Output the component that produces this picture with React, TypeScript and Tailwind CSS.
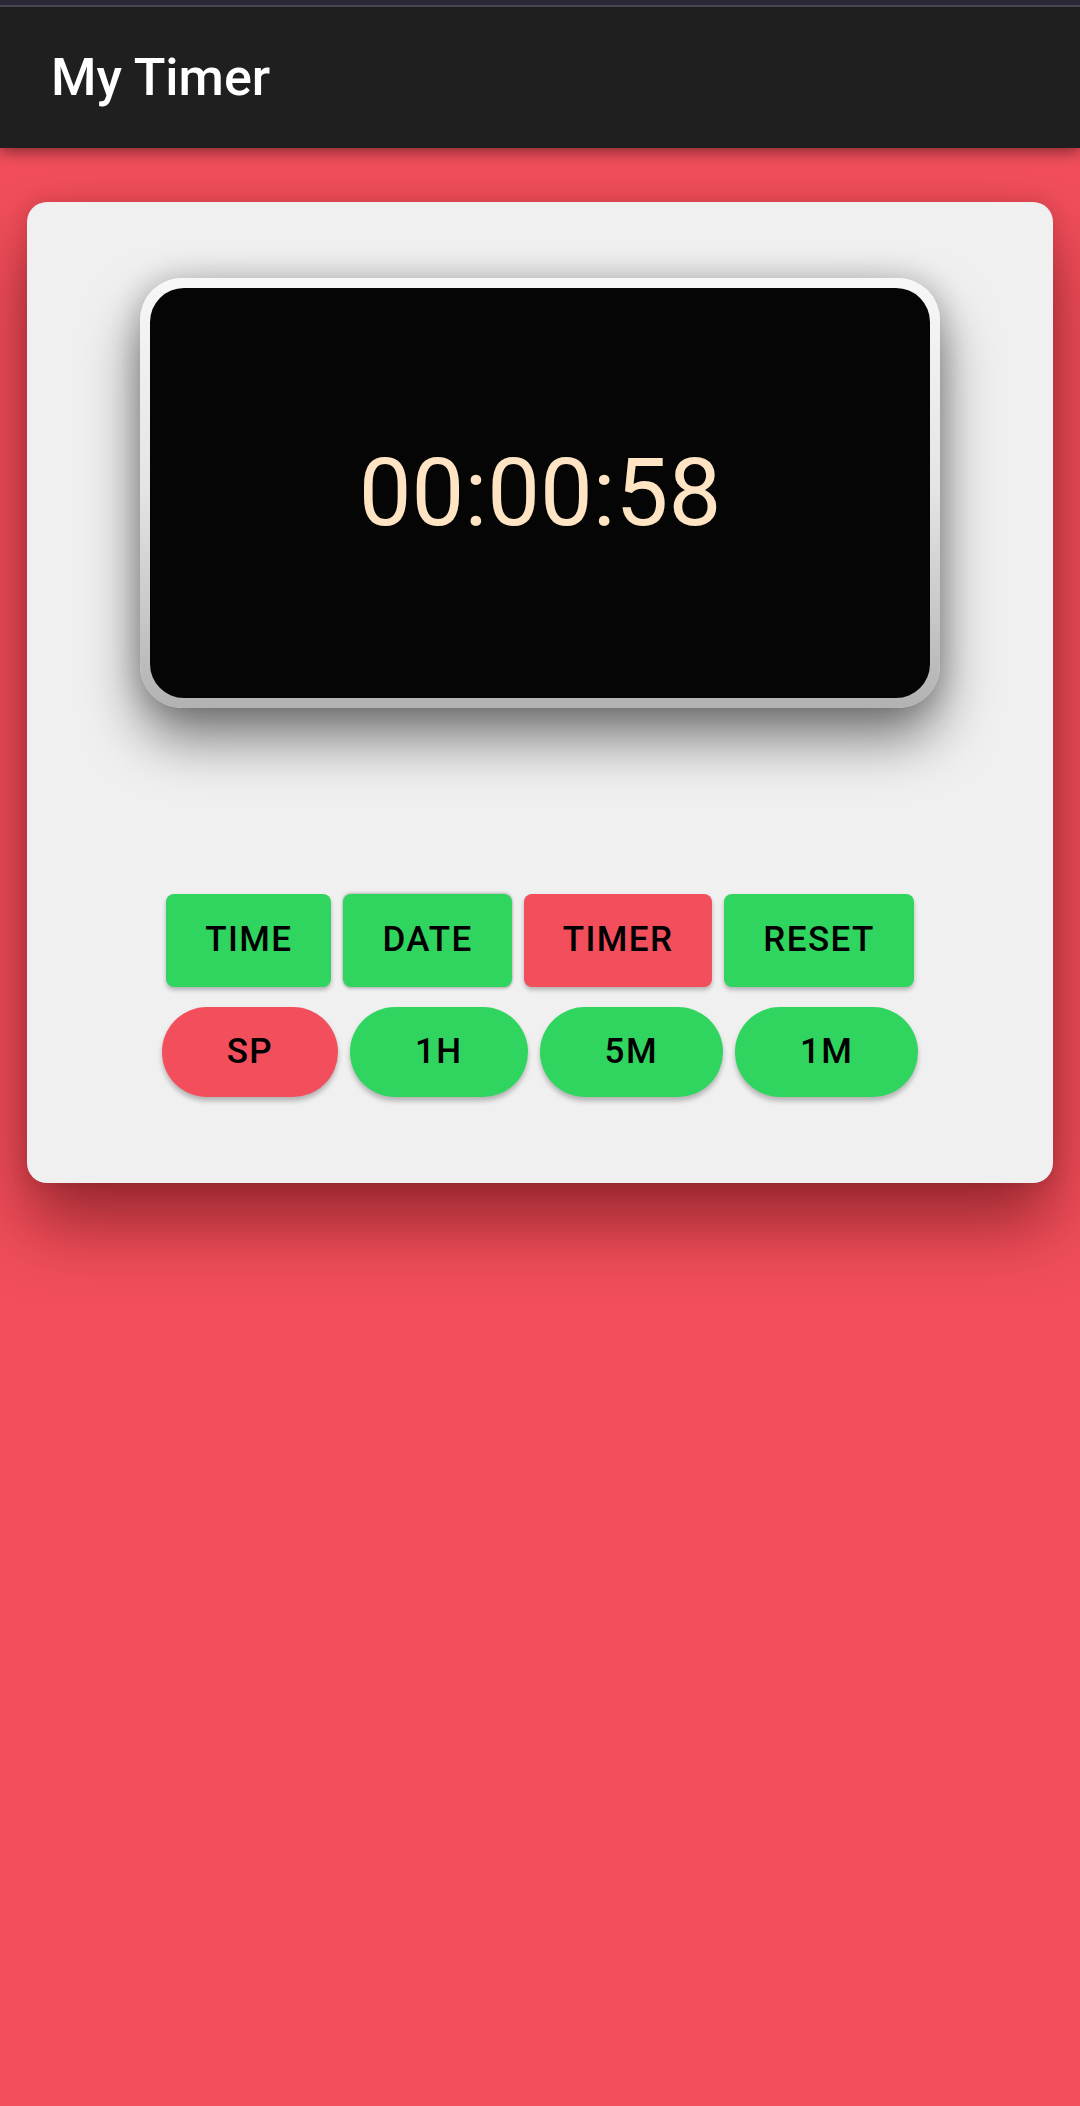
import React, { useState } from 'react';

const GREEN = 'bg-[#30d55f]';
const RED = 'bg-[#f24e5b]';

const App: React.FC = () => {
  const [mode, setMode] = useState<string>('timer');
  const [seconds] = useState<number>(58);

  const fmt = (s: number) => {
    const h = Math.floor(s / 3600);
    const m = Math.floor((s % 3600) / 60);
    const r = s % 60;
    return [h, m, r].map((n) => String(n).padStart(2, '0')).join(':');
  };

  const modes = [
    { key: 'time', label: 'TIME' },
    { key: 'date', label: 'DATE' },
    { key: 'timer', label: 'TIMER' },
    { key: 'reset', label: 'RESET' },
  ];

  const presets = ['SP', '1H', '5M', '1M'];

  return (
    <div className="min-h-[2106px] w-[1080px] bg-[#f24e5b] font-['Roboto',sans-serif]">
      {/* status strip + app bar */}
      <div className="relative z-10 shadow-[0_4px_14px_rgba(0,0,0,0.45)]">
        <div className="h-[5px] bg-[#2a2935]" />
        <div className="h-[2px] bg-[#45444f]" />
        <header className="flex h-[141px] items-center bg-[#1f1f1f] px-[51px]">
          <h1 className="text-[52px] font-medium leading-none text-white">My Timer</h1>
        </header>
      </div>

      {/* card */}
      <div className="px-[27px] pt-[54px]">
        <div className="rounded-[20px] bg-[#f0f0f0] px-[113px] pb-[86px] pt-[76px] shadow-[0_40px_70px_rgba(60,0,0,0.5),0_0_20px_rgba(60,0,0,0.15)]">
          {/* display */}
          <div className="rounded-[42px] bg-gradient-to-b from-[#f7f7f7] via-[#e4e4e4] to-[#b2b2b2] p-[10px] shadow-[0_30px_55px_rgba(0,0,0,0.5),0_0_30px_rgba(0,0,0,0.2)]">
            <div className="flex h-[410px] items-center justify-center rounded-[34px] bg-[#050505]">
              <span className="text-[94px] leading-none text-[#ffe4c4]">{fmt(seconds)}</span>
            </div>
          </div>

          {/* mode buttons */}
          <div className="mt-[186px] flex justify-center gap-[12px]">
            {modes.map((m) => (
              <button
                key={m.key}
                onClick={() => setMode(m.key)}
                className={`h-[93px] rounded-[8px] px-[39px] text-[35px] font-medium tracking-[0.04em] text-black ${
                  mode === m.key ? RED : GREEN
                } ${
                  m.key === 'date'
                    ? 'shadow-[0_-1px_3px_rgba(0,0,0,0.25),0_2px_3px_rgba(0,0,0,0.2)]'
                    : 'shadow-[0_3px_4px_rgba(0,0,0,0.25)]'
                }`}
              >
                {m.label}
              </button>
            ))}
          </div>

          {/* preset buttons */}
          <div className="mt-[20px] flex justify-center gap-[12px]">
            {presets.map((p, i) => (
              <button
                key={p}
                className={`h-[90px] rounded-full px-[65px] text-[35px] font-medium tracking-[0.04em] text-black shadow-[0_4px_5px_rgba(0,0,0,0.25)] ${
                  i === 0 ? RED : GREEN
                }`}
              >
                {p}
              </button>
            ))}
          </div>
        </div>
      </div>
    </div>
  );
};

export default App;
